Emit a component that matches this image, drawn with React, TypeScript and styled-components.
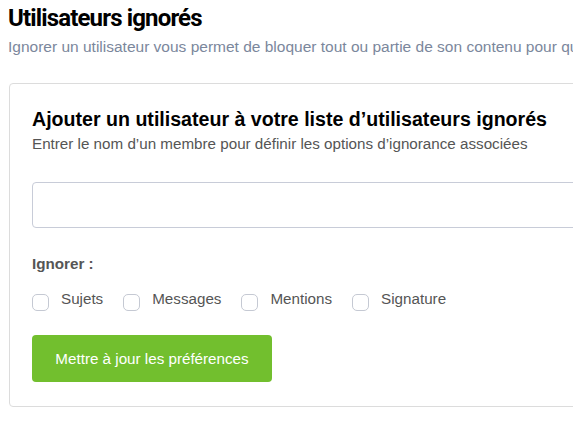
import React from "react";
import styled, { createGlobalStyle } from "styled-components";

const GlobalStyle = createGlobalStyle`
  html, body {
    margin: 0;
    padding: 0;
    background: #fff;
    overflow: hidden;
  }
  body {
    font-family: "Liberation Sans", Arial, sans-serif;
  }
`;

const Page = styled.div`
  width: 900px;
  padding: 2px 0 0 8px;
`;

const PageTitle = styled.h1`
  margin: 0;
  font-family: Roboto, "Liberation Sans", sans-serif;
  font-weight: 700;
  font-size: 24px;
  line-height: 32px;
  letter-spacing: -0.85px;
  color: #000;
`;

const Lead = styled.p`
  margin: 3px 0 0;
  font-size: 15.5px;
  line-height: 20px;
  color: #7b879c;
  white-space: nowrap;
`;

const Card = styled.section`
  margin: 26px 0 0 1px;
  border: 1px solid #dcdcdc;
  border-radius: 4px;
  padding: 22px 22px 24px;
`;

const CardTitle = styled.h2`
  margin: 0;
  font-size: 19.6px;
  line-height: 26px;
  font-weight: 700;
  color: #000;
`;

const CardText = styled.p`
  margin: 2px 0 0;
  font-size: 15.2px;
  line-height: 20px;
  color: #555;
`;

const TextInput = styled.input`
  display: block;
  box-sizing: border-box;
  width: 100%;
  height: 46px;
  margin-top: 28px;
  border: 1px solid #c8ccd8;
  border-radius: 4px;
  background: #fff;
`;

const Label = styled.div`
  margin-top: 27px;
  font-size: 15.2px;
  font-weight: 700;
  color: #555;
`;

const Options = styled.div`
  display: flex;
  gap: 20px;
  margin-top: 18px;
`;

const Option = styled.label`
  display: flex;
  align-items: flex-start;
  gap: 12px;
  font-size: 15.2px;
  color: #555;
`;

const Box = styled.span`
  box-sizing: border-box;
  width: 17px;
  height: 17px;
  margin-top: 4px;
  border: 1px solid #c5c9d3;
  border-radius: 5px;
`;

const Button = styled.button`
  display: block;
  margin-top: 24px;
  width: 240px;
  height: 47px;
  border: 0;
  border-radius: 4px;
  background: #72bf2e;
  color: #fff;
  font-family: "Liberation Sans", Arial, sans-serif;
  font-size: 15.2px;
`;

const options = ["Sujets", "Messages", "Mentions", "Signature"];

export default function App() {
  return (
    <Page>
      <GlobalStyle />
      <PageTitle>Utilisateurs ignorés</PageTitle>
      <Lead>
        Ignorer un utilisateur vous permet de bloquer tout ou partie de son contenu pour qu’il
        n’apparaisse plus.
      </Lead>
      <Card>
        <CardTitle>Ajouter un utilisateur à votre liste d’utilisateurs ignorés</CardTitle>
        <CardText>Entrer le nom d’un membre pour définir les options d’ignorance associées</CardText>
        <TextInput type="text" />
        <Label>Ignorer :</Label>
        <Options>
          {options.map(o => (
            <Option key={o}>
              <Box />
              {o}
            </Option>
          ))}
        </Options>
        <Button>Mettre à jour les préférences</Button>
      </Card>
    </Page>
  );
}
